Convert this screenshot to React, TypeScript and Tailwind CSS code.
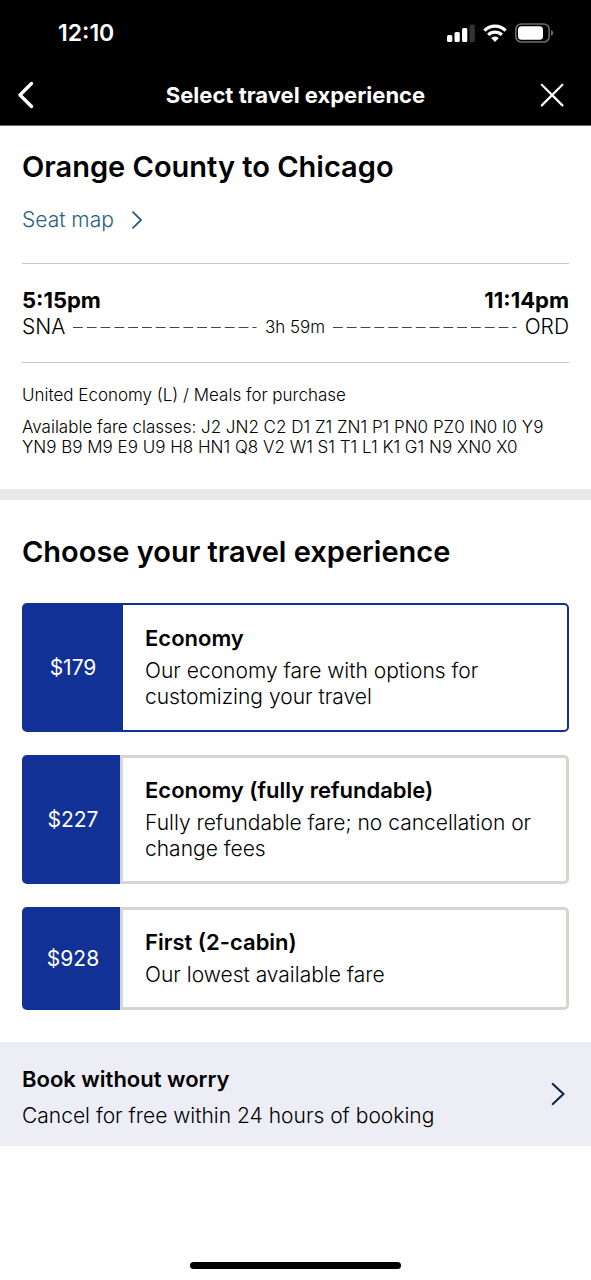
import { useState } from "react";

type Fare = { id: string; price: string; name: string; description: string };

const fares: Fare[] = [
  {
    id: "economy",
    price: "$179",
    name: "Economy",
    description: "Our economy fare with options for customizing your travel",
  },
  {
    id: "economy-refundable",
    price: "$227",
    name: "Economy (fully refundable)",
    description: "Fully refundable fare; no cancellation or change fees",
  },
  {
    id: "first",
    price: "$928",
    name: "First (2-cabin)",
    description: "Our lowest available fare",
  },
];

function StatusBar() {
  return (
    <div className="flex h-[66px] items-center justify-between pr-[37px] pl-[58px]">
      <span className="text-[23px] leading-7 font-semibold">12:10</span>
      <div className="flex items-center gap-2">
        <svg width="28" height="18" viewBox="0 0 28 18" fill="#fff" aria-hidden="true">
          <rect x="0" y="11" width="5.300" height="7" rx="1.500" />
          <rect x="7.500" y="8" width="5.300" height="10" rx="1.500" />
          <rect x="15" y="4" width="5.300" height="14" rx="1.500" />
          <rect x="22.500" y="0.500" width="5.300" height="17.500" rx="1.500" fill="#333" />
        </svg>
        <svg width="24" height="18" viewBox="0 0 24 18" fill="none" stroke="#fff" aria-hidden="true">
          <path d="M1.400 6.600a15 15 0 0 1 21.200 0" strokeWidth="3.200" />
          <path d="M5.200 10.900a9.600 9.600 0 0 1 13.600 0" strokeWidth="3.200" />
          <path d="M12 18l-3.800-3.900a5.400 5.400 0 0 1 7.600 0z" fill="#fff" stroke="none" />
        </svg>
        <svg width="39" height="20" viewBox="0 0 39 20" fill="none" aria-hidden="true">
          <rect x="0.800" y="1" width="33.400" height="18" rx="5.500" stroke="#6b6b6b" strokeWidth="1.600" />
          <rect x="3" y="3.200" width="25" height="13.600" rx="3.500" fill="#fff" />
          <path d="M36 7v6c1.400-.6 2.200-1.700 2.200-3S37.400 7.600 36 7z" fill="#6b6b6b" />
        </svg>
      </div>
    </div>
  );
}

function NavBar() {
  return (
    <nav className="grid h-[59px] grid-cols-[1fr_auto_1fr] items-center pb-px">
      <button type="button" aria-label="Back" className="ml-[14px] flex size-6 items-center justify-center justify-self-start">
        <svg width="20" height="28" viewBox="0 0 20 28" fill="none" stroke="#fff" strokeWidth="3.400" strokeLinecap="round" strokeLinejoin="round" className="shrink-0">
          <path d="M15.500 2.500L4 14l11.500 11.500" />
        </svg>
      </button>
      <h1 className="text-[22px] leading-7 font-bold">Select travel experience</h1>
      <button type="button" aria-label="Close" className="mr-[27px] flex size-6 items-center justify-center justify-self-end">
        <svg width="24" height="24" viewBox="0 0 24 24" fill="none" stroke="#fff" strokeWidth="2.200" strokeLinecap="round">
          <path d="M1.800 1.800l20.600 20.600M22.400 1.800L1.800 22.400" />
        </svg>
      </button>
    </nav>
  );
}

function DashedLine() {
  return (
    <svg className="h-px min-w-0 flex-1" aria-hidden="true">
      <line x1="0" y1="0.5" x2="100%" y2="0.5" stroke="#444" strokeWidth="1" strokeDasharray="9.800 4" />
    </svg>
  );
}

function FareCard({ fare, selected, onSelect }: { fare: Fare; selected: boolean; onSelect: () => void }) {
  return (
    <button type="button" aria-pressed={selected} onClick={onSelect} className="flex w-full text-left">
      <span className="flex w-[98px] shrink-0 items-center justify-center self-stretch rounded-l-[5px] bg-[#123196] pl-1 text-[21px] leading-[26px] text-white">
        {fare.price}
      </span>
      <span
        className={
          selected
            ? "flex flex-1 flex-col gap-[7px] rounded-r-[5px] border-2 border-l-3 border-[#123196] px-[22px] py-5"
            : "flex flex-1 flex-col gap-[7px] rounded-r-[5px] border-3 border-[#d5d6d2] px-[22px] py-[19px]"
        }
      >
        <span className="text-[22px] leading-[26px] font-semibold">{fare.name}</span>
        <span className="text-[21px] leading-[26px] font-light">{fare.description}</span>
      </span>
    </button>
  );
}

export default function App() {
  const [selected, setSelected] = useState("economy");

  return (
    <div className="flex min-h-screen flex-col bg-white font-['Inter',sans-serif] text-black">
      <header className="border-b border-[#666] bg-black text-white">
        <StatusBar />
        <NavBar />
      </header>

      <main>
        <section className="px-[22px] pt-[23px] pb-8">
          <h2 className="text-[29px] leading-9 font-semibold">Orange County to Chicago</h2>
          <a href="#seat-map" className="mt-[21px] flex items-center gap-[18px] text-[21px] leading-7 font-light text-[#2a5f80]">
            Seat map
            <svg width="10" height="18" viewBox="0 0 10 18" fill="none" stroke="currentColor" strokeWidth="1.800" strokeLinecap="round" strokeLinejoin="round" aria-hidden="true">
              <path d="M1 1.200L9 9l-8 7.800" />
            </svg>
          </a>

          <div className="mt-[29px] border-y border-[#c8c8c8] pt-[22px] pb-[22px]">
            <div className="flex justify-between text-[22px] leading-7 font-bold">
              <span>5:15pm</span>
              <span>11:14pm</span>
            </div>
            <div className="flex items-center gap-2 text-[21px] leading-[26px] font-light">
              <span>SNA</span>
              <DashedLine />
              <span className="text-[17px]">3h 59m</span>
              <DashedLine />
              <span>ORD</span>
            </div>
          </div>

          <p className="mt-[22px] text-[17px] leading-5 font-light">United Economy (L) / Meals for purchase</p>
          <p className="mt-3 text-[17px] leading-5 font-light">
            Available fare classes: J2 JN2 C2 D1 Z1 ZN1 P1 PN0 PZ0 IN0 I0 Y9 YN9 B9 M9 E9 U9 H8 HN1 Q8 V2 W1 S1 T1 L1 K1 G1 N9 XN0 X0
          </p>
        </section>

        <section className="border-t-[11px] border-[#e8e8e6] px-[22px] pt-[34px] pb-8">
          <h2 className="text-[29px] leading-9 font-semibold">Choose your travel experience</h2>
          <div className="mt-[33px] flex flex-col gap-[23px]">
            {fares.map((fare) => (
              <FareCard
                key={fare.id}
                fare={fare}
                selected={fare.id === selected}
                onSelect={() => setSelected(fare.id)}
              />
            ))}
          </div>
        </section>

        <a href="#book-without-worry" className="flex items-center justify-between bg-[#ecedf5] pt-6 pr-[26px] pb-[17px] pl-[22px]">
          <span className="flex flex-col gap-[11px]">
            <span className="text-[22px] leading-[26px] font-semibold">Book without worry</span>
            <span className="text-[21px] leading-[26px] font-light">Cancel for free within 24 hours of booking</span>
          </span>
          <svg width="14" height="24" viewBox="0 0 14 24" fill="none" stroke="#14264a" strokeWidth="2.200" strokeLinecap="round" strokeLinejoin="round" className="mb-2" aria-hidden="true">
            <path d="M1.800 2L12.500 12 1.800 22" />
          </svg>
        </a>
      </main>

      <div className="mt-auto flex justify-center pb-[11px]">
        <div className="h-[7px] w-[211px] rounded-full bg-black" />
      </div>
    </div>
  );
}
